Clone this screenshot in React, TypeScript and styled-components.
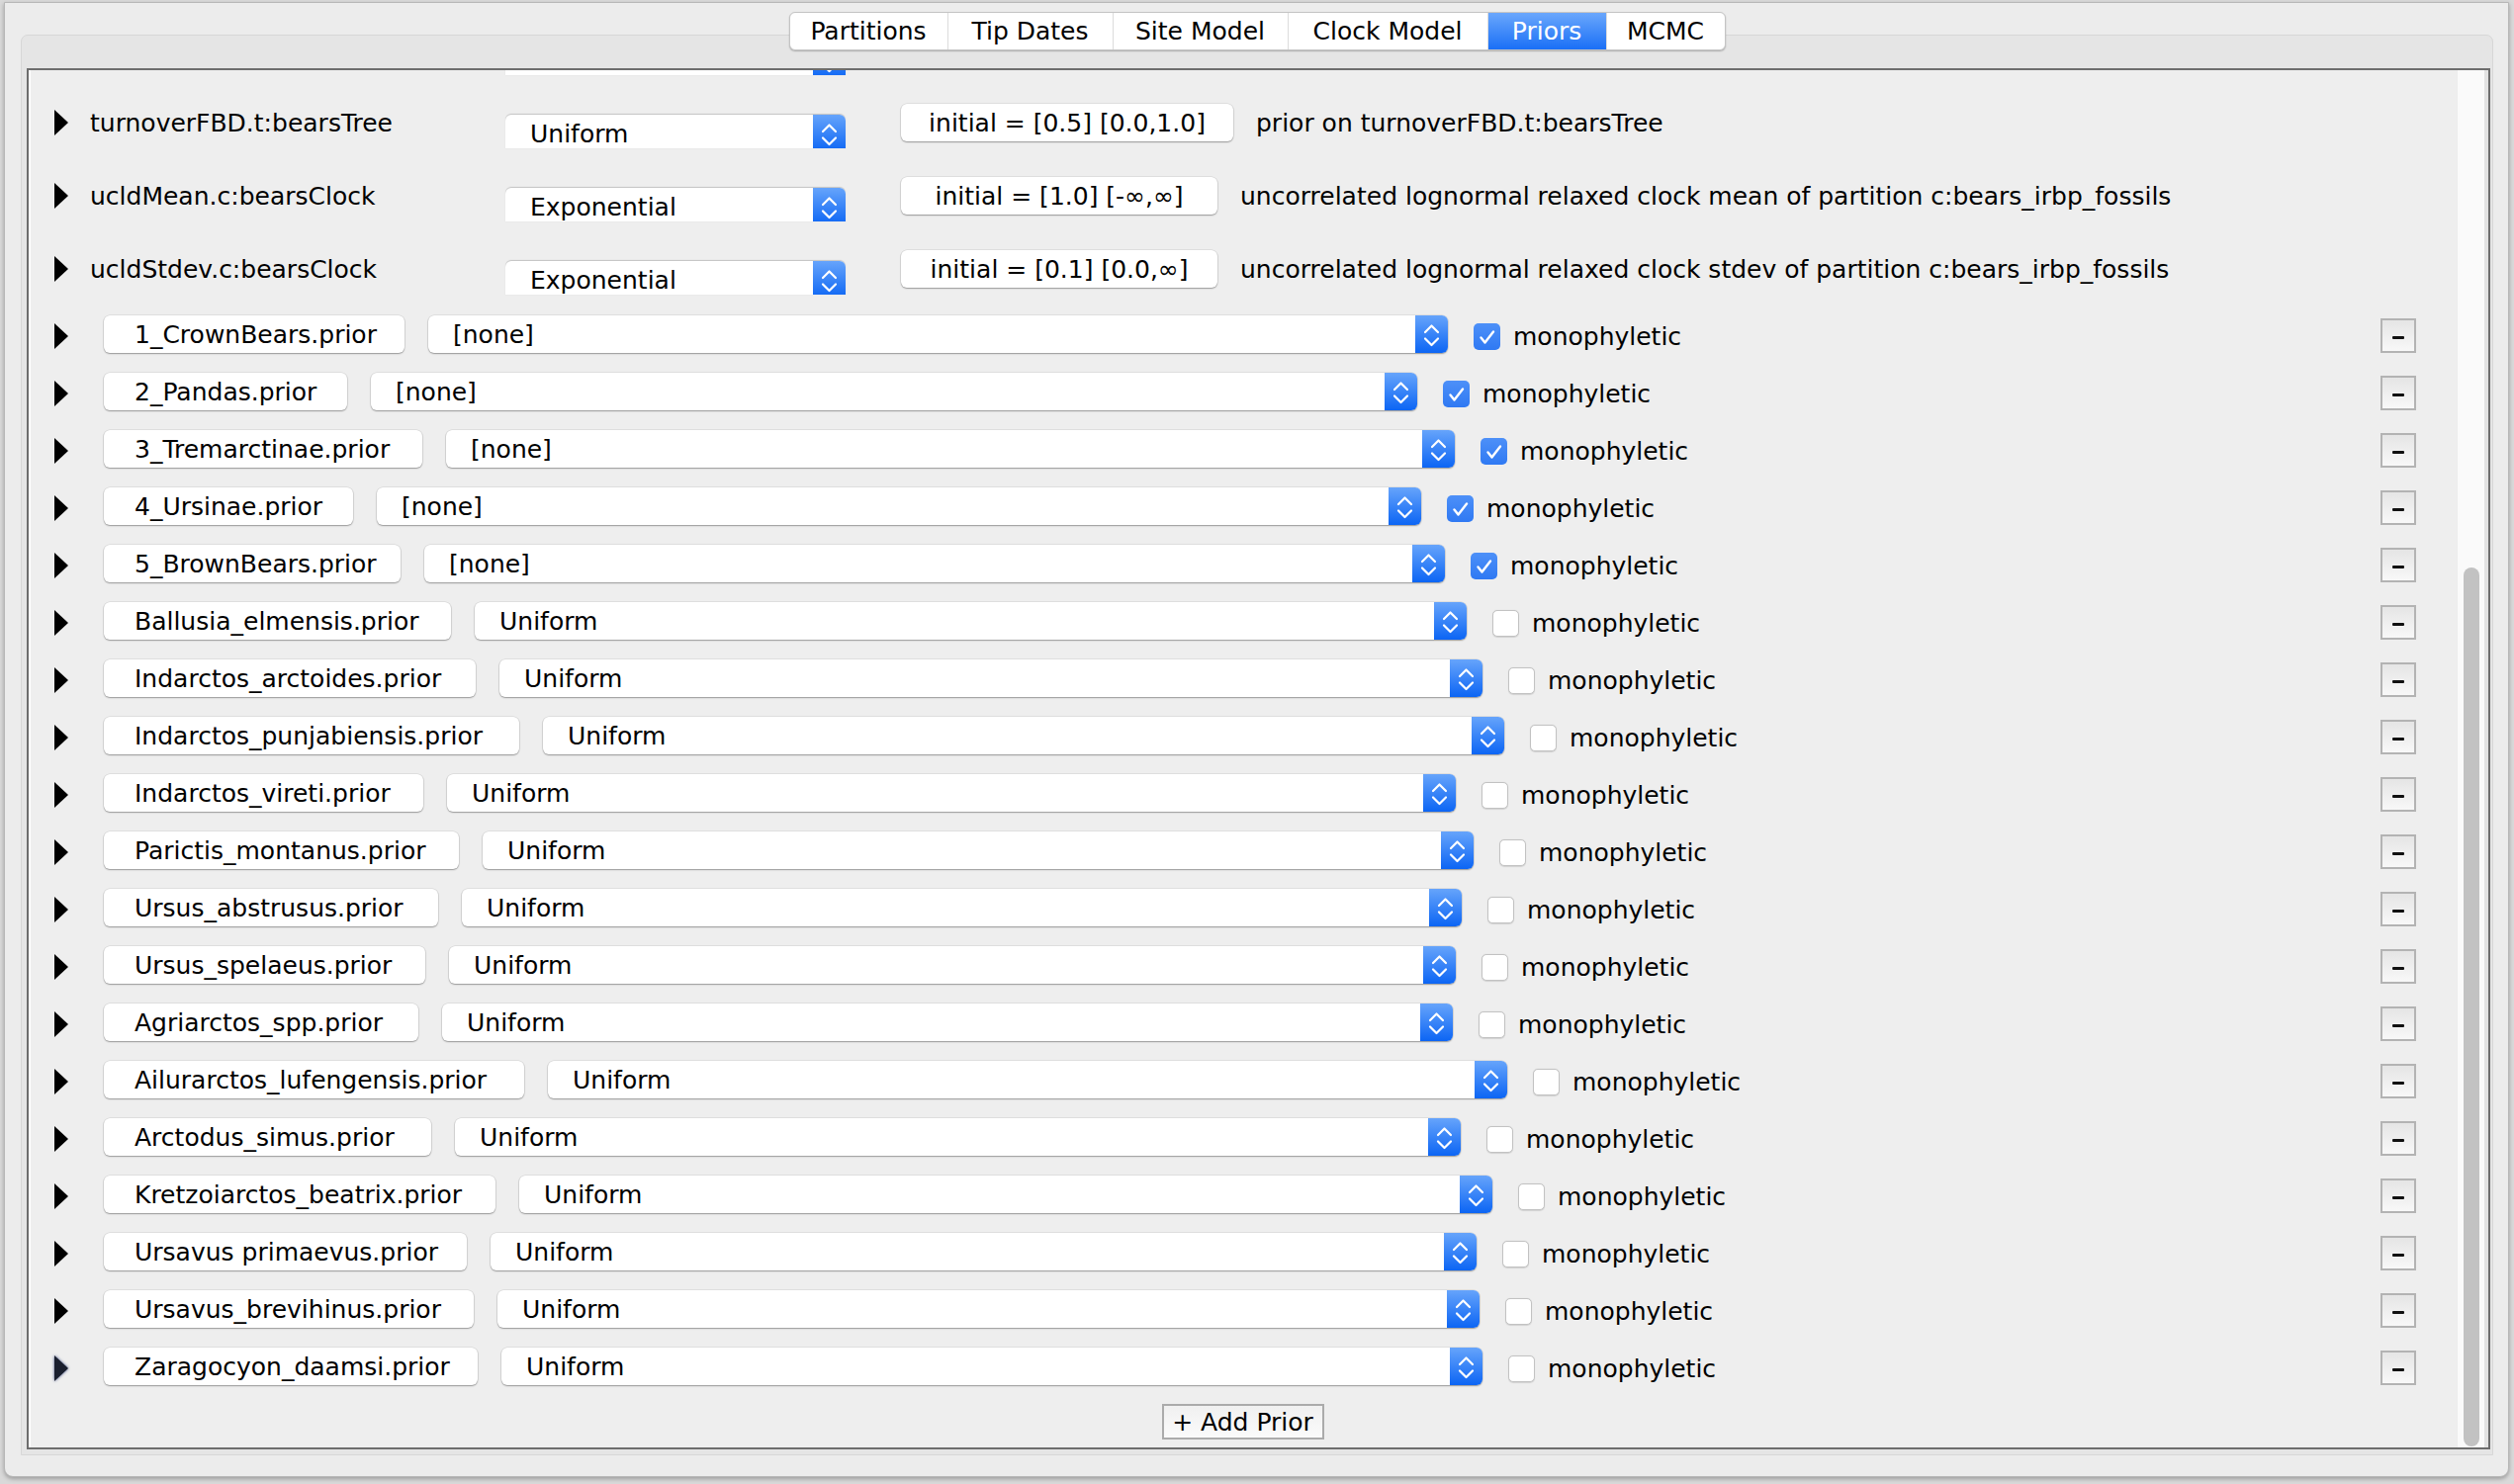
import React from "react";
import styled, { createGlobalStyle, css } from "styled-components";

const GlobalStyle = createGlobalStyle`
  html, body { margin: 0; padding: 0; background: #d9d9d9; }
  body {
    font-family: "DejaVu Sans", "Liberation Sans", sans-serif;
    font-size: 25px;
    color: #000;
  }
  #root { width: 2542px; height: 1501px; overflow: hidden; }
`;

const Window = styled.div`
  box-sizing: border-box;
  margin: 2px 0 0 4px;
  width: 2533px;
  height: 1492px;
  background: #ececec;
  border: 1px solid #b7b7b7;
  border-radius: 0 0 9px 9px;
  box-shadow: 0 2px 4px rgba(0, 0, 0, 0.28);
  display: flex;
  flex-direction: column;
  padding: 9px 15px 21px 16px;
`;

const TabStrip = styled.div`
  align-self: center;
  position: relative;
  z-index: 1;
  display: flex;
  height: 39px;
  box-sizing: border-box;
  margin-bottom: -16px;
  border: 1px solid #c4c4c4;
  border-radius: 6px;
  background: #ffffff;
  overflow: hidden;
  box-shadow: 0 1px 1.5px rgba(0, 0, 0, 0.25);
`;

const Tab = styled.div<{ $w: number; $active?: boolean }>`
  width: ${(p) => p.$w}px;
  display: flex;
  align-items: center;
  justify-content: center;
  font-size: 25px;
  white-space: nowrap;
  & + & { border-left: 1px solid #dcdcdc; }
  ${(p) =>
    p.$active &&
    css`
      background: linear-gradient(#6aa7fc, #1a6ff6);
      color: #ffffff;
      border-left-color: transparent;
    `}
`;

const Panel = styled.div`
  flex: 1;
  min-height: 0;
  display: flex;
  flex-direction: column;
  background: #e5e5e5;
  border: 1px solid #d7d7d7;
  border-radius: 7px 7px 0 0;
  padding: 33px 2px 5px 5px;
`;

const Frame = styled.div`
  flex: 1;
  min-height: 0;
  display: flex;
  background: #eeeeee;
  border: 2px solid #6d6d6d;
  box-shadow: inset 2px 0 0 #ffffff;
  overflow: hidden;
`;

const Viewport = styled.div`
  flex: 1;
  min-width: 0;
  overflow: hidden;
`;

const ScrollContent = styled.div<{ $offset: number }>`
  display: flex;
  flex-direction: column;
  margin-top: ${(p) => -p.$offset}px;
`;

const Track = styled.div`
  width: 32px;
  box-sizing: border-box;
  background: #fafafa;
  border-left: 1px solid #ececec;
  border-right: 4px solid #e2e2e2;
  padding-left: 6px;
`;

const Thumb = styled.div<{ $top: number; $h: number }>`
  width: 16px;
  margin-top: ${(p) => p.$top}px;
  height: ${(p) => p.$h}px;
  border-radius: 8px;
  background: #c2c2c2;
`;

const ParamRow = styled.div`
  height: 74px;
  display: flex;
  align-items: center;
  padding-left: 26px;
  white-space: nowrap;
`;

const TaxonRow = styled.div`
  height: 58px;
  display: flex;
  align-items: center;
  padding: 0 41px 0 26px;
  white-space: nowrap;
`;

const Disclosure = styled.svg<{ $gap: number; $shift?: number; $focus?: boolean }>`
  flex: none;
  width: 14px;
  height: 26px;
  margin-right: ${(p) => p.$gap}px;
  margin-top: ${(p) => p.$shift ?? 0}px;
  ${(p) =>
    p.$focus &&
    css`
      filter: drop-shadow(0 0 1.5px #3a4a80);
    `}
`;

const ParamLabel = styled.div`
  width: 420px;
  flex: none;
`;

const SelectBox = styled.div<{ $w: number; $h: number; $clipped?: boolean }>`
  flex: none;
  width: ${(p) => p.$w}px;
  height: ${(p) => p.$h}px;
  display: flex;
  align-items: flex-start;
  background: #ffffff;
  border-radius: ${(p) => (p.$clipped ? "6px 6px 0 0" : "6px")};
  box-shadow: ${(p) =>
    p.$clipped
      ? "0 -0.5px 1px rgba(0,0,0,0.18)"
      : "0 0 0 0.5px rgba(0,0,0,0.12), 0 1px 1.5px rgba(0,0,0,0.32)"};
  overflow: hidden;
`;

const SelectText = styled.div`
  flex: 1;
  height: 38px;
  display: flex;
  align-items: center;
  padding-left: 25px;
`;

const Stepper = styled.div`
  width: 33px;
  height: 38px;
  flex: none;
  background: linear-gradient(#66a4fb, #0c65f4);
  display: flex;
  align-items: flex-start;
  justify-content: center;
`;

const NameButton = styled.div<{ $w: number }>`
  flex: none;
  box-sizing: border-box;
  width: ${(p) => p.$w}px;
  height: 38px;
  display: flex;
  align-items: center;
  padding-left: 31px;
  margin-right: 24px;
  background: #ffffff;
  border-radius: 6px;
  box-shadow: 0 0 0 0.5px rgba(0, 0, 0, 0.12), 0 1px 1.5px rgba(0, 0, 0, 0.32);
`;

const InitialButton = styled.div<{ $w: number }>`
  flex: none;
  box-sizing: border-box;
  width: ${(p) => p.$w}px;
  height: 38px;
  margin-left: 56px;
  display: flex;
  align-items: center;
  justify-content: center;
  background: #ffffff;
  border-radius: 6px;
  box-shadow: 0 0 0 0.5px rgba(0, 0, 0, 0.12), 0 1px 1.5px rgba(0, 0, 0, 0.32);
`;

const Description = styled.div`
  margin-left: 23px;
`;

const CheckBox = styled.div<{ $checked: boolean }>`
  flex: none;
  box-sizing: border-box;
  width: 27px;
  height: 27px;
  margin: 4px 13px 0 26px;
  border-radius: 5px;
  display: flex;
  align-items: center;
  justify-content: center;
  ${(p) =>
    p.$checked
      ? css`
          background: linear-gradient(#4d90f8, #2f79f3);
        `
      : css`
          background: #ffffff;
          border: 1px solid #c2c2c2;
          box-shadow: 0 0.5px 1px rgba(0, 0, 0, 0.12);
        `}
`;

const CheckLabel = styled.div`
  margin-top: 4px;
`;

const Spacer = styled.div`
  flex: 1;
`;

const MinusButton = styled.div`
  flex: none;
  box-sizing: border-box;
  width: 36px;
  height: 35px;
  margin-top: 2px;
  border: 2px solid #b3b3b3;
  background: linear-gradient(#e5e5e5, #f8f8f8);
  display: flex;
  align-items: center;
  justify-content: center;
  &::after {
    content: "";
    display: block;
    width: 12px;
    height: 3px;
    margin-top: 4px;
    background: #111;
    border-radius: 1px;
  }
`;

const AddRow = styled.div`
  display: flex;
  justify-content: center;
  padding-top: 9px;
`;

const AddButton = styled.div`
  box-sizing: border-box;
  width: 164px;
  height: 36px;
  border: 2px solid #ababab;
  background: linear-gradient(#f0f0f0, #fbfbfb);
  display: flex;
  align-items: center;
  justify-content: center;
  white-space: nowrap;
`;

const ParamSelectWrap = styled.div`
  margin-top: 18px;
  flex: none;
`;

const Triangle: React.FC<{ gap: number; shift?: number; focus?: boolean }> = ({ gap, shift, focus }) => (
  <Disclosure $gap={gap} $shift={shift} $focus={focus} viewBox="0 0 14 26">
    <polygon points="0,0 14,13 0,26" fill={focus ? "#1a1f2e" : "#000"} />
  </Disclosure>
);

const Chevrons: React.FC = () => (
  <svg width="33" height="38" viewBox="0 0 33 38">
    <polyline points="10,17 16.5,10.5 23,17" fill="none" stroke="#fff" strokeWidth="2.2" strokeLinecap="round" strokeLinejoin="round" />
    <polyline points="10,23.5 16.5,30 23,23.5" fill="none" stroke="#fff" strokeWidth="2.2" strokeLinecap="round" strokeLinejoin="round" />
  </svg>
);

const Select: React.FC<{ w: number; h: number; value: string; clipped?: boolean }> = ({ w, h, value, clipped }) => (
  <SelectBox $w={w} $h={h} $clipped={clipped}>
    <SelectText>{value}</SelectText>
    <Stepper>
      <Chevrons />
    </Stepper>
  </SelectBox>
);

const CheckMark: React.FC = () => (
  <svg width="27" height="27" viewBox="0 0 27 27">
    <polyline points="7.5,14.5 11.5,19.5 20,8.5" fill="none" stroke="#fff" strokeWidth="2.4" strokeLinecap="round" strokeLinejoin="round" />
  </svg>
);

type Param = { name: string; dist: string; initial: string; initW: number; desc: string; partial?: boolean };

const params: Param[] = [
  // row scrolled almost out of view: only the bottom edge of its dropdown shows
  { name: "", dist: "", initial: "", initW: 336, desc: "", partial: true },
  {
    name: "turnoverFBD.t:bearsTree",
    dist: "Uniform",
    initial: "initial = [0.5] [0.0,1.0]",
    initW: 336,
    desc: "prior on turnoverFBD.t:bearsTree",
  },
  {
    name: "ucldMean.c:bearsClock",
    dist: "Exponential",
    initial: "initial = [1.0] [-∞,∞]",
    initW: 320,
    desc: "uncorrelated lognormal relaxed clock mean of partition c:bears_irbp_fossils",
  },
  {
    name: "ucldStdev.c:bearsClock",
    dist: "Exponential",
    initial: "initial = [0.1] [0.0,∞]",
    initW: 320,
    desc: "uncorrelated lognormal relaxed clock stdev of partition c:bears_irbp_fossils",
  },
];

type Taxon = { name: string; nw: number; dw: number; value: string; checked: boolean };

const taxa: Taxon[] = [
  { name: "1_CrownBears.prior", nw: 304, dw: 1031, value: "[none]", checked: true },
  { name: "2_Pandas.prior", nw: 246, dw: 1058, value: "[none]", checked: true },
  { name: "3_Tremarctinae.prior", nw: 322, dw: 1020, value: "[none]", checked: true },
  { name: "4_Ursinae.prior", nw: 252, dw: 1056, value: "[none]", checked: true },
  { name: "5_BrownBears.prior", nw: 300, dw: 1032, value: "[none]", checked: true },
  { name: "Ballusia_elmensis.prior", nw: 351, dw: 1003, value: "Uniform", checked: false },
  { name: "Indarctos_arctoides.prior", nw: 376, dw: 994, value: "Uniform", checked: false },
  { name: "Indarctos_punjabiensis.prior", nw: 420, dw: 972, value: "Uniform", checked: false },
  { name: "Indarctos_vireti.prior", nw: 323, dw: 1020, value: "Uniform", checked: false },
  { name: "Parictis_montanus.prior", nw: 359, dw: 1002, value: "Uniform", checked: false },
  { name: "Ursus_abstrusus.prior", nw: 338, dw: 1011, value: "Uniform", checked: false },
  { name: "Ursus_spelaeus.prior", nw: 325, dw: 1018, value: "Uniform", checked: false },
  { name: "Agriarctos_spp.prior", nw: 318, dw: 1022, value: "Uniform", checked: false },
  { name: "Ailurarctos_lufengensis.prior", nw: 425, dw: 970, value: "Uniform", checked: false },
  { name: "Arctodus_simus.prior", nw: 331, dw: 1017, value: "Uniform", checked: false },
  { name: "Kretzoiarctos_beatrix.prior", nw: 396, dw: 984, value: "Uniform", checked: false },
  { name: "Ursavus primaevus.prior", nw: 367, dw: 997, value: "Uniform", checked: false },
  { name: "Ursavus_brevihinus.prior", nw: 374, dw: 993, value: "Uniform", checked: false },
  { name: "Zaragocyon_daamsi.prior", nw: 378, dw: 992, value: "Uniform", checked: false },
];

const tabs: { label: string; w: number; active?: boolean }[] = [
  { label: "Partitions", w: 159 },
  { label: "Tip Dates", w: 166 },
  { label: "Site Model", w: 176 },
  { label: "Clock Model", w: 201 },
  { label: "Priors", w: 119, active: true },
  { label: "MCMC", w: 119 },
];

export default function App() {
  return (
    <>
      <GlobalStyle />
      <Window>
        <TabStrip>
          {tabs.map((t) => (
            <Tab key={t.label} $w={t.w} $active={t.active}>
              {t.label}
            </Tab>
          ))}
        </TabStrip>
        <Panel>
          <Frame>
            <Viewport>
              <ScrollContent $offset={58}>
                {params.map((p, i) => (
                  <ParamRow key={p.name || `partial-${i}`}>
                    <Triangle gap={22} />
                    <ParamLabel>{p.name}</ParamLabel>
                    <ParamSelectWrap>
                      <Select w={344} h={34} value={p.dist} clipped />
                    </ParamSelectWrap>
                    {!p.partial && <InitialButton $w={p.initW}>{p.initial}</InitialButton>}
                    {!p.partial && <Description>{p.desc}</Description>}
                  </ParamRow>
                ))}
                {taxa.map((t, i) => (
                  <TaxonRow key={t.name}>
                    <Triangle gap={36} shift={4} focus={i === taxa.length - 1} />
                    <NameButton $w={t.nw}>{t.name}</NameButton>
                    <Select w={t.dw} h={38} value={t.value} />
                    <CheckBox $checked={t.checked}>{t.checked && <CheckMark />}</CheckBox>
                    <CheckLabel>monophyletic</CheckLabel>
                    <Spacer />
                    <MinusButton />
                  </TaxonRow>
                ))}
                <AddRow>
                  <AddButton>+ Add Prior</AddButton>
                </AddRow>
              </ScrollContent>
            </Viewport>
            <Track>
              <Thumb $top={503} $h={889} />
            </Track>
          </Frame>
        </Panel>
      </Window>
    </>
  );
}
